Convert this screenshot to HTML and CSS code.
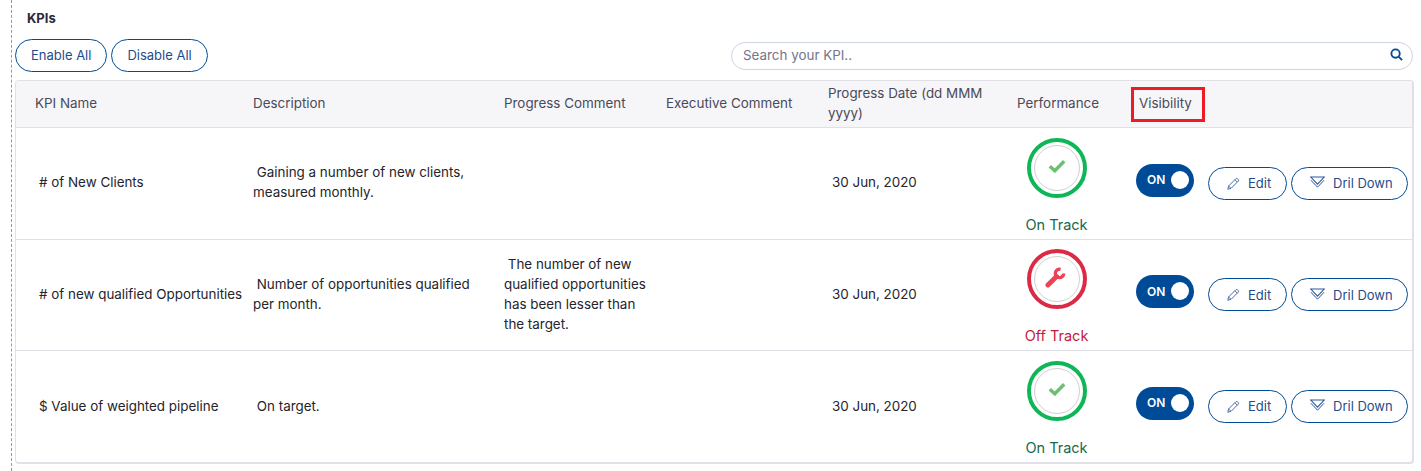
FILE: index.html
```html
<!DOCTYPE html>
<html lang="en">
<head>
<meta charset="utf-8">
<title>KPIs</title>
<link rel="stylesheet" href="styles.css">
</head>
<body>
<svg class="defs" width="0" height="0">
  <symbol id="pencil" viewBox="0 0 13 13"><path d="M.8 12.200l.8-3.200L8.800 1.800a1.300 1.300 0 0 1 1.800 0l.6.6a1.300 1.300 0 0 1 0 1.800L4 11.400zM1.600 9L4 11.400M7.900 2.700l2.400 2.400" fill="none" stroke="currentColor" stroke-width="1"/></symbol>
  <symbol id="drill" viewBox="0 0 15 12"><path d="M.8 1h13.400L7.500 8.200z" fill="none" stroke="currentColor" stroke-width="1.100"/><path d="M.9 4.200L7.500 11.200l6.600-7" fill="none" stroke="currentColor" stroke-width="1"/></symbol>
  <symbol id="check" viewBox="0 0 18 14"><path d="M1.800 7.200l5 4.600L16.200 2.200" fill="none" stroke="#6cbf73" stroke-width="3.400"/></symbol>
  <symbol id="wrench" viewBox="0 0 20 20"><path d="M2.800 17.200L11 9" fill="none" stroke="#ef4056" stroke-width="4.600" stroke-linecap="round"/><path d="M14.800 2.300A4 4 0 1 0 17.800 6.200" fill="none" stroke="#ef4056" stroke-width="3.200"/></symbol>
</svg>
<main class="page">
  <h2 class="title">KPIs</h2>
  <div class="toolbar">
    <div class="actions">
      <button class="btn">Enable All</button>
      <button class="btn">Disable All</button>
    </div>
    <div class="search">
      <span class="placeholder">Search your KPI..</span>
      <svg class="search-icon" viewBox="0 0 14 14"><circle cx="6" cy="6" r="4.500" fill="none" stroke="#004b98" stroke-width="2"/><path d="M9.500 9.500L13 13" stroke="#004b98" stroke-width="2"/></svg>
    </div>
  </div>
  <div class="table-wrap">
    <table class="kpi">
      <colgroup>
        <col class="c1"><col class="c2"><col class="c3"><col class="c4"><col class="c5"><col class="c6"><col class="c7">
      </colgroup>
      <thead>
        <tr>
          <th class="first">KPI Name</th>
          <th>Description</th>
          <th>Progress Comment</th>
          <th>Executive Comment</th>
          <th>Progress Date (dd MMM yyyy)</th>
          <th>Performance</th>
          <th><span class="flagged">Visibility</span></th>
        </tr>
      </thead>
      <tbody>
        <tr>
          <td class="name"># of New Clients</td>
          <td>&nbsp;Gaining a number of new clients, measured monthly.</td>
          <td class="comment"></td>
          <td></td>
          <td class="date">30 Jun, 2020</td>
          <td class="widget"><div class="perf"><span class="ring good"><span class="inner"><svg class="ic-check"><use href="#check"/></svg></span></span><span class="label ok">On Track</span></div></td>
          <td class="widget"><div class="controls"><span class="toggle">ON<i class="knob"></i></span><button class="btn small edit"><svg class="ic-pencil"><use href="#pencil"/></svg>Edit</button><button class="btn small drill"><svg class="ic-drill"><use href="#drill"/></svg>Dril Down</button></div></td>
        </tr>
        <tr>
          <td class="name"># of new qualified Opportunities</td>
          <td>&nbsp;Number of opportunities qualified per month.</td>
          <td class="comment">&nbsp;The number of new qualified opportunities has been lesser than the target.</td>
          <td></td>
          <td class="date">30 Jun, 2020</td>
          <td class="widget"><div class="perf"><span class="ring bad"><span class="inner"><svg class="ic-wrench"><use href="#wrench"/></svg></span></span><span class="label off">Off Track</span></div></td>
          <td class="widget"><div class="controls"><span class="toggle">ON<i class="knob"></i></span><button class="btn small edit"><svg class="ic-pencil"><use href="#pencil"/></svg>Edit</button><button class="btn small drill"><svg class="ic-drill"><use href="#drill"/></svg>Dril Down</button></div></td>
        </tr>
        <tr class="last">
          <td class="name">$ Value of weighted pipeline</td>
          <td>&nbsp;On target.</td>
          <td class="comment"></td>
          <td></td>
          <td class="date">30 Jun, 2020</td>
          <td class="widget"><div class="perf"><span class="ring good"><span class="inner"><svg class="ic-check"><use href="#check"/></svg></span></span><span class="label ok">On Track</span></div></td>
          <td class="widget"><div class="controls"><span class="toggle">ON<i class="knob"></i></span><button class="btn small edit"><svg class="ic-pencil"><use href="#pencil"/></svg>Edit</button><button class="btn small drill"><svg class="ic-drill"><use href="#drill"/></svg>Dril Down</button></div></td>
        </tr>
      </tbody>
    </table>
  </div>
</main>
</body>
</html>
```
FILE: styles.css
```css
* { box-sizing: border-box; }
html, body { margin: 0; padding: 0; background: #fff; }
body {
  width: 1421px;
  height: 471px;
  overflow: hidden;
  font-family: Inter, "Liberation Sans", sans-serif;
  font-size: 13.400px;
  color: #24242c;
}
.defs { position: absolute; }
.page {
  height: 471px;
  margin-left: 11px;
  padding: 0 8px 0 3px;
  border-left: 1px dashed #8d9bb0;
}
.title {
  margin: 0;
  padding: 10px 0 0 12px;
  height: 39px;
  font-size: 13px;
  font-weight: 700;
  line-height: 16px;
  color: #2a2a3c;
}
.toolbar { display: flex; justify-content: space-between; align-items: flex-start; height: 41px; }
.actions { display: flex; gap: 4px; }
.btn {
  height: 33px;
  padding: 0 15px 2px;
  border: 1px solid #004b98;
  border-radius: 17px;
  background: #fff;
  font-family: inherit;
  font-size: 13px;
  color: #1f4d8c;
  white-space: nowrap;
}
.search {
  width: 682px;
  height: 28px;
  margin-top: 3px;
  padding: 0 9px 2px 11px;
  border: 1px solid #cfd6e2;
  border-radius: 14px;
  display: flex;
  align-items: center;
  justify-content: space-between;
}
.placeholder { color: #72768a; }
.search-icon { width: 13px; height: 13px; margin-top: -1px; }
.table-wrap {
  border: 1px solid #e0e0e6;
  border-width: 1px 2px 2px 1px;
  border-radius: 4px;
  overflow: hidden;
  width: 1399px;
}
.kpi { width: 100%; table-layout: fixed; border-collapse: collapse; }
.c1 { width: 227px; }
.c2 { width: 251px; }
.c3 { width: 162px; }
.c4 { width: 162px; }
.c5 { width: 189px; }
.c6 { width: 122px; }
thead tr { background: #f6f6f9; height: 46px; }
th {
  padding: 0 10px 2px;
  text-align: left;
  font-weight: 400;
  color: #4a4a58;
  line-height: 20px;
}
th.first { padding-left: 19px; }
.flagged {
  display: block;
  width: 74px;
  height: 35px;
  margin: 2px 0 -1px -8px;
  padding-left: 5px;
  line-height: 26px;
  border: 3px solid #ed1c24;
}
tbody tr { border-top: 1px solid #e0e0e6; height: 112px; }
tbody tr:nth-child(2) { height: 111px; }
td {
  padding: 0 10px 2px;
  line-height: 20px;
  vertical-align: middle;
  color: #24242c;
}
tr.last td { padding-bottom: 0; }
td.name { padding-left: 23px; padding-right: 0; white-space: nowrap; }
td.date { padding-left: 14px; }
td.comment { padding-right: 0; }
td.widget { padding-right: 0; padding-bottom: 0; }
.perf { width: 79px; padding-top: 6px; display: flex; flex-direction: column; align-items: center; }
.ring {
  width: 60px;
  height: 60px;
  border-radius: 50%;
  border: 4px solid;
  display: flex;
  align-items: center;
  justify-content: center;
}
.ring.good { border-color: #0db757; }
.ring.bad { border-color: #dc2a44; }
.inner {
  width: 46px;
  height: 46px;
  border: 1px solid #d0d0d0;
  border-radius: 50%;
  display: flex;
  align-items: center;
  justify-content: center;
}
.ic-check { width: 18px; height: 14px; margin-top: -3px; }
.ic-wrench { width: 21px; height: 21px; margin: -3px 0 0 -3px; }
.label { margin-top: 17px; font-size: 14.500px; line-height: 20px; white-space: nowrap; }
.label.ok { color: #17694a; }
.label.off { color: #c51a3e; }
.controls { display: flex; align-items: center; margin-left: -3px; }
.toggle {
  flex: none;
  width: 58px;
  height: 33px;
  margin-top: -6px;
  border-radius: 17px;
  background: #004b98;
  color: #fff;
  font-size: 12px;
  font-weight: 600;
  padding-left: 11px;
  display: flex;
  align-items: center;
  position: relative;
}
.knob {
  position: absolute;
  right: 5px;
  top: 7px;
  width: 18px;
  height: 18px;
  border-radius: 50%;
  background: #fff;
}
.btn.small { flex: none; display: inline-flex; align-items: center; }
.edit { width: 79px; margin-left: 14px; padding: 0 0 0 18px; }
.drill { width: 117px; margin-left: 4px; padding: 0 0 0 18px; }
.ic-pencil { width: 13px; height: 13px; margin-right: 8px; color: #4a6ea8; }
.ic-drill { width: 15px; height: 12px; margin-right: 8px; margin-top: -2px; color: #2a5a9c; }
```
